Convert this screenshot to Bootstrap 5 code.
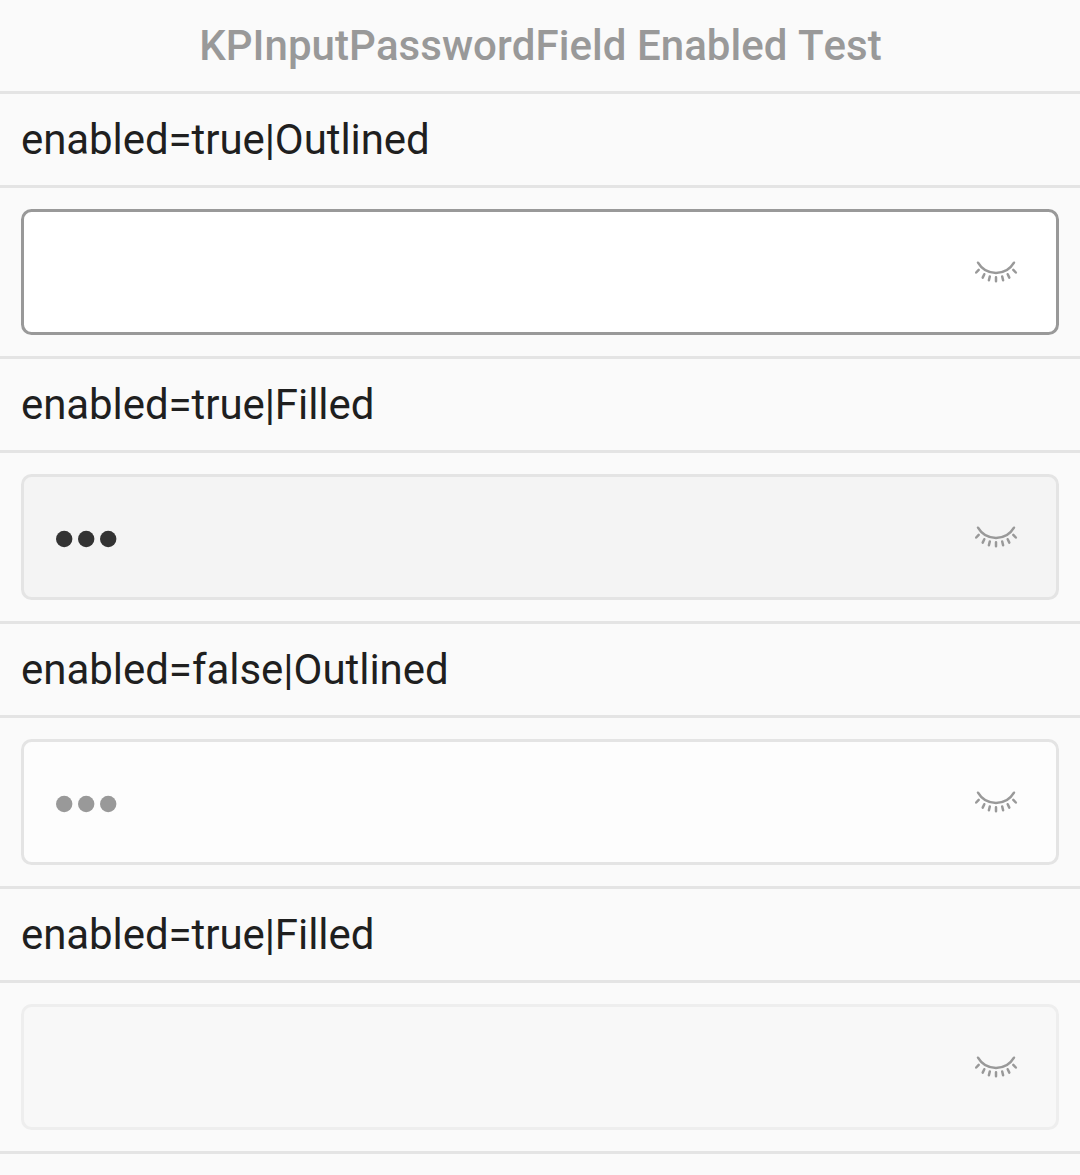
<!DOCTYPE html>
<html lang="en">
<head>
<meta charset="utf-8">
<meta name="viewport" content="width=device-width, initial-scale=1">
<title>KPInputPasswordField Enabled Test</title>
<link href="https://cdn.jsdelivr.net/npm/bootstrap@5.3.0/dist/css/bootstrap.min.css" rel="stylesheet">
<style>
body { background: #fafafa; font-family: Roboto, sans-serif; font-size: 42px; line-height: 49px; color: #1f1f1f; overflow: hidden; }
.line-row { border-bottom: 3px solid #e4e4e4; }
.title-row { height: 94px; padding-left: 1px; color: #999; font-weight: 500; font-kerning: none; letter-spacing: .04px; }
.label-row { height: 94px; padding: 0 21px; letter-spacing: -.07px; }
.label-false { letter-spacing: -.03px; }
.field-row { padding: 21px; }
.pw-field { height: 126px; border: 3px solid #e4e4e4; border-radius: 10.5px; padding: 0 30px 0 32px; }
.pw-outlined { background: #fff; border-color: #999; }
.pw-filled { background: #f4f4f4; }
.pw-outlined-off { background: #fdfdfd; }
.pw-filled-off { background: #f8f8f8; border-color: #eee; }
.mask { width: 62px; height: 20px; fill: #333; margin-top: 4px; }
.mask-off { fill: #999; }
.eye { width: 60px; height: 40px; fill: none; stroke: #999; stroke-width: 2.5; stroke-linecap: round; position: relative; top: -2px; }
</style>
</head>
<body>
<svg class="d-none">
  <symbol id="eye-closed" viewBox="0 0 60 40">
    <path d="M12 12.7C15.7 19 22.4 23 30 23S44.3 19 48 12.7M12.7 19.9L10.2 22.5M18.3 24.2L16.7 27.6M23.8 26.5L22.9 30.3M30 27.2V31.3M36.2 26.5L37.1 30.3M41.7 24.2L43.3 27.6M47.3 19.9L49.8 22.5"/>
  </symbol>
  <symbol id="mask-dots" viewBox="0 0 62 20">
    <circle cx="8.2" cy="10" r="8.2"/><circle cx="30.2" cy="10" r="8.2"/><circle cx="52.2" cy="10" r="8.2"/>
  </symbol>
</svg>
<main>
  <header class="line-row title-row d-flex align-items-center justify-content-center">KPInputPasswordField Enabled Test</header>

  <div class="line-row label-row d-flex align-items-center">enabled=true|Outlined</div>
  <div class="line-row field-row">
    <div class="pw-field pw-outlined d-flex align-items-center">
      <svg class="eye ms-auto"><use href="#eye-closed"/></svg>
    </div>
  </div>

  <div class="line-row label-row d-flex align-items-center">enabled=true|Filled</div>
  <div class="line-row field-row">
    <div class="pw-field pw-filled d-flex align-items-center">
      <svg class="mask"><use href="#mask-dots"/></svg>
      <svg class="eye ms-auto"><use href="#eye-closed"/></svg>
    </div>
  </div>

  <div class="line-row label-row label-false d-flex align-items-center">enabled=false|Outlined</div>
  <div class="line-row field-row">
    <div class="pw-field pw-outlined-off d-flex align-items-center">
      <svg class="mask mask-off"><use href="#mask-dots"/></svg>
      <svg class="eye ms-auto"><use href="#eye-closed"/></svg>
    </div>
  </div>

  <div class="line-row label-row d-flex align-items-center">enabled=true|Filled</div>
  <div class="line-row field-row">
    <div class="pw-field pw-filled-off d-flex align-items-center">
      <svg class="eye ms-auto"><use href="#eye-closed"/></svg>
    </div>
  </div>
</main>
<script src="https://cdn.jsdelivr.net/npm/bootstrap@5.3.0/dist/js/bootstrap.bundle.min.js"></script>
</body>
</html>
